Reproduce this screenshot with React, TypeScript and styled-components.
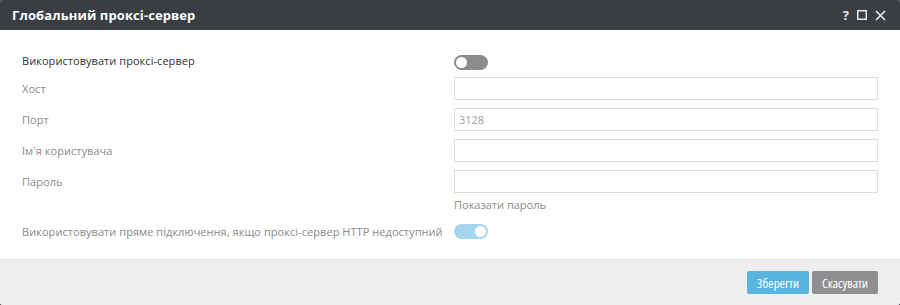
import styled, { createGlobalStyle } from 'styled-components'

const GlobalStyle = createGlobalStyle`
	html, body {
		margin: 0;
		padding: 0;
		background: #3a3d42;
	}
	* {
		box-sizing: border-box;
	}
`
const Dialog = styled.div`
	width: 900px;
	height: 305px;
	display: flex;
	flex-direction: column;
	background: #ffffff;
	border-radius: 3px;
	overflow: hidden;
	font-family: 'Open Sans', 'Noto Sans', sans-serif;
`
const TitleBar = styled.div`
	height: 30px;
	flex: none;
	display: flex;
	align-items: center;
	justify-content: space-between;
	padding: 0 14px 0 12px;
	background: #3a3d42;
	color: #ffffff;
`
const Title = styled.h1`
	margin: 0;
	font-size: 13px;
	font-weight: 700;
	letter-spacing: 0.1px;
`
const TitleTools = styled.div`
	display: flex;
	align-items: center;
	gap: 8px;
	color: #e8e8e8;
`
const Help = styled.span`
	font-size: 13px;
	font-weight: 700;
	line-height: 1;
`
const Body = styled.div`
	flex: 1;
	padding: 18px 22px 0 22px;
	display: flex;
	flex-direction: column;
`
const Row = styled.div<{ $h: number }>`
	display: grid;
	grid-template-columns: 432px 1fr;
	align-items: center;
	height: ${(p) => p.$h}px;
`
const Label = styled.label<{ $strong?: boolean }>`
	font-size: 11px;
	letter-spacing: 0.05px;
	white-space: nowrap;
	color: ${(p) => (p.$strong ? '#333333' : '#8a8a8a')};
`
const Input = styled.input`
	width: 424px;
	height: 23px;
	border: 1px solid #dcdcdc;
	padding: 0 4px;
	font-family: inherit;
	font-size: 11px;
	color: #999999;
	outline: none;
	&::placeholder {
		color: #a0a0a0;
	}
`
const Hint = styled.div`
	grid-column: 2;
	font-size: 11px;
	color: #8a8a8a;
`
const Toggle = styled.span<{ $on?: boolean; $drop?: number }>`
	position: relative;
	display: block;
	width: 34px;
	height: 15px;
	margin-top: ${(p) => p.$drop ?? 0}px;
	border-radius: 8px;
	background: ${(p) => (p.$on ? '#a6d6ef' : '#8c8c8c')};
	&::after {
		content: '';
		position: absolute;
		top: 2px;
		left: ${(p) => (p.$on ? '21px' : '2px')};
		width: 11px;
		height: 11px;
		border-radius: 50%;
		background: #ffffff;
	}
`
const Footer = styled.div`
	height: 46px;
	flex: none;
	display: flex;
	align-items: center;
	justify-content: flex-end;
	gap: 3px;
	padding: 0 22px 0 0;
	background: #eeeeee;
	border-top: 1px solid #e4e4e4;
`
const Button = styled.button<{ $primary?: boolean }>`
	height: 23px;
	padding: 0 10px;
	border: none;
	border-radius: 2px;
	font-family: 'Liberation Sans Narrow', 'Open Sans', sans-serif;
	font-stretch: condensed;
	font-size: 13px;
	color: #ffffff;
	background: ${(p) => (p.$primary ? '#5ab4e0' : '#8f8f8f')};
`

export default function App() {
	return (
		<>
			<GlobalStyle />
			<Dialog>
				<TitleBar>
					<Title>Глобальний проксі-сервер</Title>
					<TitleTools>
						<Help>?</Help>
						<svg width="10" height="10" viewBox="0 0 10 10">
							<rect x="0.75" y="0.75" width="8.5" height="8.5" fill="none" stroke="#e8e8e8" strokeWidth="1.5" />
						</svg>
						<svg width="11" height="11" viewBox="0 0 11 11">
							<path d="M1 1 L10 10 M10 1 L1 10" stroke="#e8e8e8" strokeWidth="1.6" />
						</svg>
					</TitleTools>
				</TitleBar>
				<Body>
					<Row $h={25}>
						<Label $strong>Використовувати проксі-сервер</Label>
						<Toggle $drop={3} />
					</Row>
					<Row $h={31}>
						<Label>Хост</Label>
						<Input />
					</Row>
					<Row $h={31}>
						<Label>Порт</Label>
						<Input placeholder="3128" />
					</Row>
					<Row $h={31}>
						<Label>Ім'я користувача</Label>
						<Input />
					</Row>
					<Row $h={31}>
						<Label>Пароль</Label>
						<Input type="password" />
					</Row>
					<Row $h={15}>
						<Hint>Показати пароль</Hint>
					</Row>
					<Row $h={38}>
						<Label>Використовувати пряме підключення, якщо проксі-сервер HTTP недоступний</Label>
						<Toggle $on />
					</Row>
				</Body>
				<Footer>
					<Button $primary>Зберегти</Button>
					<Button>Скасувати</Button>
				</Footer>
			</Dialog>
		</>
	)
}
